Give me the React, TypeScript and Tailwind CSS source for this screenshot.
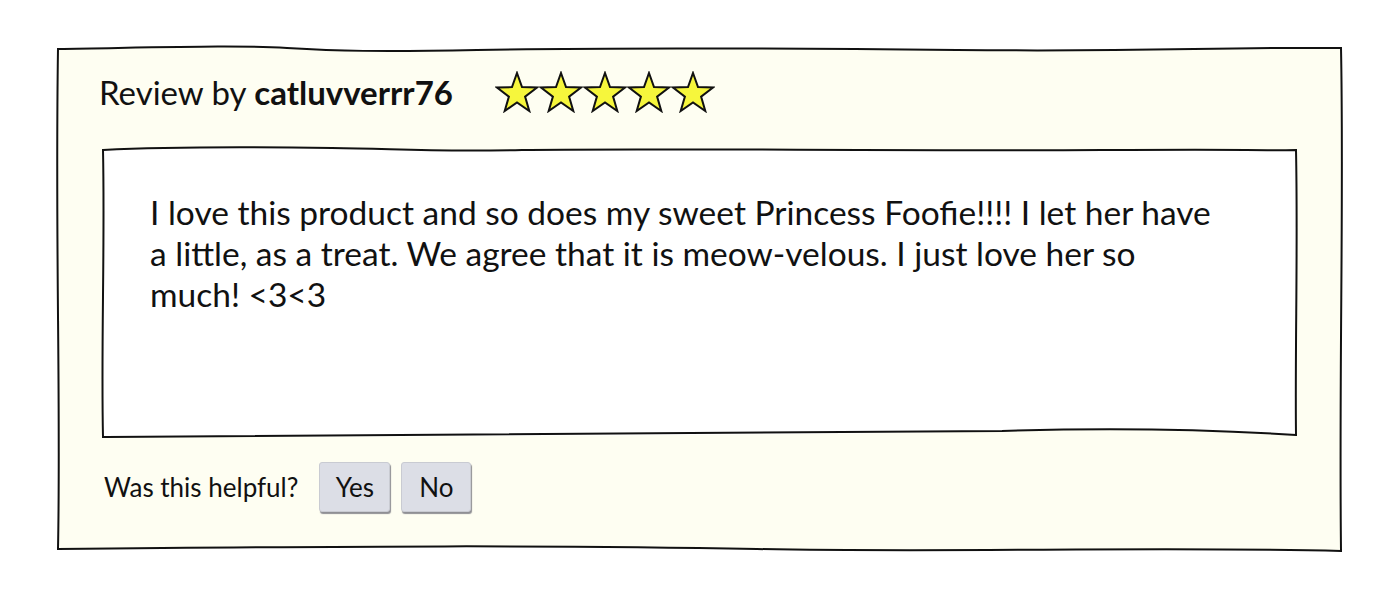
import React from "react";

const STAR_POINTS =
  "22,2 27,16.1 42,16.5 30.1,25.6 34.3,40 22,31.5 9.7,40 13.9,25.6 2,16.5 17,16.1";

function Star() {
  return (
    <svg width="44" height="42" viewBox="0 0 44 42" aria-hidden>
      <polygon
        points={STAR_POINTS}
        fill="#f6f63c"
        stroke="#111"
        strokeWidth="2"
        strokeLinejoin="miter"
      />
    </svg>
  );
}

// hand-drawn looking outline, drawn behind the box content
function SketchBorder({ d, fill }: { d: string; fill: string }) {
  return (
    <svg
      className="pointer-events-none absolute inset-0 h-full w-full overflow-visible"
      aria-hidden
    >
      <path d={d} fill={fill} stroke="#111" strokeWidth="2" />
    </svg>
  );
}

const OUTER_PATH =
  "M1,3 C120,1 180,-1 230,2 S320,6 420,4 S700,2 900,4 S1150,1 1284,2 C1287,150 1282,320 1284,505 C1100,500 900,507 700,503 S300,500 1,503 C4,350 -2,200 1,3 Z";

const INNER_PATH =
  "M1,3 C80,-1 160,0 230,1 S330,5 420,3 S800,4 1000,3 S1150,4 1194,3 C1196,100 1193,200 1194,288 C1100,282 1000,281 900,284 S400,290 1,290 C-1,200 3,100 1,3 Z";

export default function App() {
  return (
    <div className="min-h-[609px] w-[1400px] bg-white pl-[57px] pt-[46px] font-['Lato',sans-serif] text-[#111]">
      <section className="relative h-[506px] w-[1285px]">
        <SketchBorder d={OUTER_PATH} fill="#fefef2" />

        <div className="relative flex h-[92px] items-center gap-[42px] pl-[42px]">
          <h2 className="text-[33px] leading-none">
            Review by <span className="font-bold">catluvverrr76</span>
          </h2>
          <div className="flex">
            <Star />
            <Star />
            <Star />
            <Star />
            <Star />
          </div>
        </div>

        <div className="relative ml-[45px] mt-[9px] h-[290px] w-[1195px] pl-[48px] pr-[72px] pt-[45px]">
          <SketchBorder d={INNER_PATH} fill="#ffffff" />
          <p className="relative text-[33.5px] leading-[41px]">
            I love this product and so does my sweet Princess Foofie!!!! I let
            her have a little, as a treat. We agree that it is meow-velous. I
            just love her so much! &lt;3&lt;3
          </p>
        </div>

        <div className="relative ml-[47px] mt-[25px] flex h-[50px] items-center">
          <span className="text-[26px]">Was this helpful?</span>
          <button className="ml-[21px] h-[50px] w-[71px] rounded-[3px] border border-[#c9cbd2] bg-[#dcdee6] text-[26px] shadow-[1px_2px_1px_#8f8f94]">
            Yes
          </button>
          <button className="ml-[11px] h-[50px] w-[70px] rounded-[3px] border border-[#c9cbd2] bg-[#dcdee6] text-[26px] shadow-[1px_2px_1px_#8f8f94]">
            No
          </button>
        </div>
      </section>
    </div>
  );
}
